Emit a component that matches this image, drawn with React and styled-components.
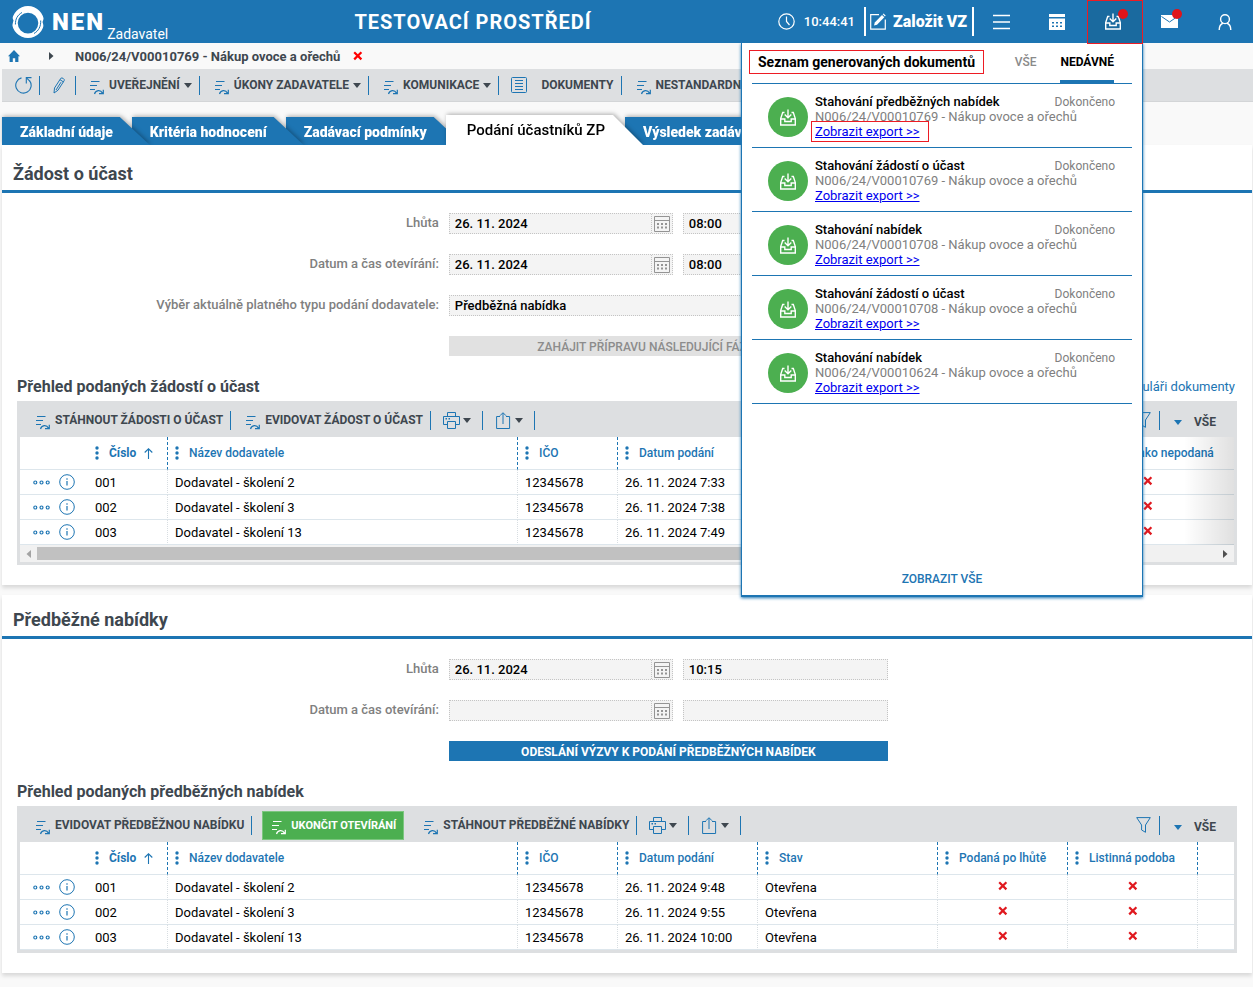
import styled, { createGlobalStyle } from "styled-components";

const BLUE = "#1d75b3";
const GREY = "#dddfe1";
const DARK = "#3e474f";

const GlobalStyle = createGlobalStyle`
  * {
    box-sizing: border-box;
  }
  body {
    margin: 0;
    background: #f9f9f9;
    font-family: Roboto, "Liberation Sans", sans-serif;
    font-size: 13px;
    color: #000;
  }
  button, input {
    font-family: inherit;
  }
  button {
    cursor: pointer;
  }
  svg {
    display: block;
    flex-shrink: 0;
  }
`;

const SHeader = styled.header`
  position: relative;
  z-index: 20;
  display: flex;
  align-items: center;
  height: 43px;
  background: ${BLUE};
  color: #fff;
`;

const Logo = styled.a`
  display: flex;
  align-items: center;
  padding-left: 12px;
  color: #fff;
  text-decoration: none;
  .name {
    margin: 0 2px 0 8px;
    font-size: 24px;
    font-weight: 900;
    letter-spacing: 2px;
  }
  .role {
    align-self: flex-end;
    font-size: 14px;
    line-height: 16px;
    padding-top: 24px;
  }
`;

const EnvTitle = styled.h1`
  flex: 1;
  margin: 0;
  text-align: center;
  font-size: 20px;
  font-weight: 700;
  letter-spacing: 1px;
`;

const Clock = styled.div`
  display: flex;
  align-items: center;
  gap: 9px;
  padding-right: 9px;
  font-weight: 500;
`;

const NewOrder = styled.button`
  display: flex;
  align-items: center;
  gap: 7px;
  height: 29px;
  margin-right: -1px;
  padding: 0 5px 0 4px;
  border: 0;
  border-left: 2px solid #fff;
  border-right: 2px solid #fff;
  background: none;
  color: #fff;
  font-size: 16px;
  font-weight: 900;
`;

const HeaderButton = styled.button`
  position: relative;
  display: flex;
  align-items: center;
  justify-content: center;
  width: 56px;
  height: ${(p) => (p.$active ? 44 : 43)}px;
  margin: ${(p) => (p.$active ? "0 -2px 0 2px" : "0")};
  padding: ${(p) => (p.$active ? "0 4px 0 0" : "0")};
  border: 1px solid ${(p) => (p.$active ? "#ed1c24" : "transparent")};
  background: ${(p) => (p.$active ? "#1a6a9f" : "none")};
  color: #fff;
`;

const Dot = styled.span`
  position: absolute;
  top: 8px;
  right: 14px;
  width: 10px;
  height: 10px;
  border-radius: 50%;
  background: #e01419;
`;

const Popup = styled.aside`
  position: absolute;
  top: 43px;
  right: 110px;
  z-index: -1;
  display: flex;
  flex-direction: column;
  width: 402px;
  height: 554px;
  padding: 0 10px;
  border: solid ${BLUE};
  border-width: 0 1px 2px;
  box-shadow: 0 1px 3px ${BLUE};
  background: #fff;
  color: #000;
`;

const PopupHead = styled.div`
  display: flex;
  align-items: stretch;
  height: 41px;
  padding-right: 18px;
  border-bottom: 1px solid ${BLUE};
  h2 {
    align-self: flex-start;
    margin: 7px auto 0 -3px;
    padding: 0 8px;
    border: 1px solid #ed1c24;
    font-size: 14px;
    line-height: 22px;
    font-weight: 700;
  }
`;

const PopupTab = styled.button`
  margin-left: 24px;
  padding: 0;
  border: 0;
  border-bottom: 3px solid ${(p) => (p.$active ? BLUE : "transparent")};
  background: none;
  color: ${(p) => (p.$active ? "#000" : "#8a8a8a")};
  font-size: 12px;
  font-weight: ${(p) => (p.$active ? 700 : 500)};
`;

const ExportList = styled.ul`
  flex: 1;
  margin: 0;
  padding: 0;
  list-style: none;
`;

const ExportRow = styled.li`
  display: grid;
  grid-template-columns: 40px minmax(0, 1fr) auto;
  column-gap: 7px;
  height: 64px;
  padding: 10px 17px 0 16px;
  border-bottom: 1px solid ${BLUE};
  line-height: 15px;
  .icon {
    display: flex;
    align-items: center;
    justify-content: center;
    width: 40px;
    height: 40px;
    margin-top: 3px;
    border-radius: 50%;
    background: #4caf50;
    color: #fff;
  }
  .name {
    font-weight: 500;
  }
  .order {
    color: #808080;
    white-space: nowrap;
  }
  .status {
    color: #808080;
    font-size: 12px;
    line-height: 17px;
  }
`;

const ExportLink = styled.a`
  display: inline-block;
  margin-left: -1px;
  padding: 0 6px 0 1px;
  outline: ${(p) => (p.$marked ? "1px solid #ed1c24" : "none")};
  outline-offset: 2px;
  color: #0000ee;
`;

const ShowAll = styled.button`
  align-self: center;
  padding: 0;
  margin-bottom: 8px;
  border: 0;
  background: none;
  color: ${BLUE};
  font-size: 12px;
  line-height: 16px;
  font-weight: 500;
`;

const Breadcrumb = styled.nav`
  display: flex;
  align-items: center;
  height: 26px;
  padding-left: 8px;
  color: ${DARK};
  font-weight: 700;
  .arrow {
    margin: 0 21px 0 29px;
  }
  .current {
    margin-right: 13px;
  }
  button {
    padding: 0;
    border: 0;
    background: none;
  }
`;

const Toolbar = styled.div`
  display: flex;
  align-items: center;
  height: 33px;
  margin-left: 2px;
  background: ${GREY};
  border-bottom: 1px solid #d3d5d7;
  overflow: hidden;
`;

const TableToolbar = styled.div`
  display: flex;
  align-items: center;
  height: 36px;
  padding: 2px 0 0 1px;
`;

const Tool = styled.button`
  display: flex;
  align-items: center;
  height: 19px;
  gap: ${(p) => p.$gap || 5}px;
  padding: 0 ${(p) => p.$right || 7}px 0 ${(p) => p.$left || 15}px;
  border: 0;
  border-right: 1px solid ${(p) => (p.$last ? "transparent" : BLUE)};
  background: none;
  color: ${DARK};
  font-size: 12px;
  font-weight: 700;
  white-space: nowrap;
  .action {
    margin-top: 4px;
  }
  .caret:last-child {
    margin-left: -1px;
  }
`;

const GreenTool = styled(Tool)`
  height: 29px;
  margin: 0 5px 0 10px;
  padding: 0 7px 0 9px;
  border: 1px solid #7cc67f;
  background: #4caf50;
  color: #fff;
  font-size: 11px;
`;

const ViewTool = styled(Tool)`
  gap: 12px;
  padding: 4px 17px 0 15px;
`;

const ToolSpace = styled.div`
  flex: 1;
`;

const Tabs = styled.ul`
  display: flex;
  align-items: flex-end;
  height: 43px;
  margin: 0;
  padding: 0 0 0 2px;
  list-style: none;
  overflow: hidden;
`;

const TabItem = styled.li`
  z-index: ${(p) => p.$order};
  margin-right: -18px;
  filter: drop-shadow(1px -1px 2px rgba(0, 0, 0, 0.3));
`;

const Tab = styled.a`
  display: block;
  height: ${(p) => (p.$active ? 30 : 28)}px;
  padding: ${(p) => (p.$active ? "0 38px 0 21px" : "0 37px 0 18px")};
  clip-path: polygon(0 0, calc(100% - 30px) 0, 100% 100%, 0 100%);
  background: ${(p) => (p.$active ? "#fff" : BLUE)};
  color: ${(p) => (p.$active ? "#000" : "#fff")};
  font-size: ${(p) => (p.$active ? 15 : 14)}px;
  line-height: 30px;
  font-weight: ${(p) => (p.$active ? 500 : 900)};
  text-decoration: none;
  white-space: nowrap;
`;

const Panel = styled.main`
  padding-bottom: 14px;
`;

const Card = styled.section`
  margin: 0 1px 10px 2px;
  padding: 0 15px 20px;
  background: #fff;
  box-shadow: 0 3px 4px rgba(0, 0, 0, 0.13);
  &:first-child {
    border-top: 4px solid #fff;
  }
`;

const CardTitle = styled.h2`
  margin: 0 -15px;
  padding: 15px 11px 6px;
  border-bottom: 3px solid ${BLUE};
  color: ${DARK};
  font-size: 18px;
  line-height: 20px;
  font-weight: 700;
`;

const Form = styled.form`
  display: grid;
  gap: 20px;
  margin: 0 -15px;
  padding: 20px 0;
`;

const FormRow = styled.div`
  display: grid;
  grid-template-columns: 35% 224px 205px;
  column-gap: 10px;
  height: ${(p) => (p.$short ? 20 : 21)}px;
  margin-left: -1px;
  label {
    text-align: right;
    line-height: 19px;
    font-weight: 500;
    color: #808080;
    white-space: nowrap;
  }
`;

const FieldBox = styled.div`
  display: flex;
  border: 1px dotted #c4c4c4;
  background: #f4f4f4;
  grid-column: ${(p) => (p.$wide ? "2 / 4" : "auto")};
  input {
    flex: 1;
    min-width: 0;
    padding: 0 5px;
    border: 0;
    background: none;
    color: #000;
    font-size: 13px;
    font-weight: 500;
  }
  button {
    display: flex;
    align-items: center;
    padding: 0 2px;
    border: 0;
    border-left: 1px dotted #c4c4c4;
    background: none;
  }
`;

const WideButton = styled.button`
  grid-column: 2 / 4;
  padding: 2px 0 0;
  border: 0;
  background: ${(p) => (p.disabled ? "#e1e1e1" : BLUE)};
  color: ${(p) => (p.disabled ? "#8c8c8c" : "#fff")};
  font-size: 12px;
  font-weight: ${(p) => (p.disabled ? 500 : 700)};
  white-space: nowrap;
`;

const ListHead = styled.div`
  display: flex;
  justify-content: space-between;
  padding: 1px 2px 4px 0;
  line-height: 20px;
  h3 {
    margin: 0;
    color: ${DARK};
    font-size: 16px;
    font-weight: 700;
  }
  a {
    color: ${BLUE};
    text-decoration: none;
  }
`;

const TableFrame = styled.div`
  background: ${GREY};
  padding: 0 3px 3px;
`;

const TableScroll = styled.div`
  position: relative;
  overflow: hidden;
  background: #fff;
`;

const EdgeShade = styled.span`
  position: absolute;
  top: 0;
  right: 0;
  bottom: 0;
  width: 50px;
  background: linear-gradient(to right, rgba(0, 0, 0, 0), rgba(0, 0, 0, 0.12));
`;

const Table = styled.table`
  width: 100%;
  border-spacing: 0;
  table-layout: fixed;
  th,
  td {
    padding: 0;
    border-bottom: 1px solid #dde6ec;
    text-align: left;
    white-space: nowrap;
  }
  th {
    height: 33px;
    border-right: 1px dashed ${BLUE};
    color: ${BLUE};
    font-size: 12px;
    font-weight: 500;
  }
  td {
    height: 25px;
    padding-left: 7px;
    border-right: 1px dotted #d8dee2;
  }
  th:first-child,
  td:first-child,
  th:last-child,
  td:last-child {
    border-right: 0;
  }
  td:has(.cross) {
    padding: 0 0 2px;
  }
  .cross {
    margin: 0 auto;
  }
`;

const HeadCell = styled.div`
  display: flex;
  align-items: center;
  gap: 10px;
  padding-left: 7px;
  font-weight: ${(p) => (p.$sorted ? 700 : 500)};
  .sort {
    margin-left: -2px;
  }
`;

const RowActions = styled.div`
  display: flex;
  align-items: center;
  gap: 9px;
  padding-left: 6px;
  button {
    padding: 0;
    border: 0;
    background: none;
  }
`;

const ScrollTrack = styled.div`
  display: flex;
  align-items: center;
  height: 17px;
  background: #f1f1f1;
  .thumb {
    width: 84%;
    height: 13px;
    background: #c1c1c1;
  }
  .arrow {
    display: flex;
    justify-content: center;
    width: 17px;
  }
  .arrow:last-child {
    margin-left: auto;
  }
`;

const LogoIcon = () => (
  <svg width="32" height="32" viewBox="0 0 32 32">
    <path
      d="M16 0a16 16 0 1 1 0 32 16 16 0 0 1 0-32zm0 6.800a10.300 10.300 0 1 0 0 20.600 10.300 10.300 0 0 0 0-20.600z"
      fill="#fff"
      fillRule="evenodd"
    />
    <path d="M10 6.500C5.500 9 3.300 13 3.400 18.500" fill="none" stroke={BLUE} />
    <path d="M22 27.500c4.500-2.500 7-7 6.700-13" fill="none" stroke={BLUE} />
    <path d="M0 11l1.500 3.500L0 20zM32 12l-1.500 4 1.500 5z" fill={BLUE} />
  </svg>
);

const ClockIcon = () => (
  <svg width="17" height="17" viewBox="0 0 17 17" fill="none" stroke="#fff" strokeWidth="1.2">
    <circle cx="8.500" cy="8.500" r="7.700" />
    <path d="M8.500 3.500v5l3 3.500" />
  </svg>
);

const EditIcon = () => (
  <svg width="16" height="17" viewBox="0 0 16 17" fill="none" stroke="#fff" strokeWidth="1.200">
    <path d="M9 1.600H.7v14.600h14.600V6.500" />
    <path d="M4 12.500l.8-3L12 2l2.300 2.200-7.300 7.500z" fill="#fff" stroke="none" />
    <path d="M12.700 1.300l2.200 2.100.8-.9L13.500.4z" fill="#fff" stroke="none" />
  </svg>
);

const MenuIcon = () => (
  <svg width="17" height="16" viewBox="0 0 17 16" stroke="#fff" strokeWidth="1.300">
    <path d="M0 1.500h17M0 8h17M0 14.500h17" />
  </svg>
);

const HeaderCalendarIcon = () => (
  <svg width="16" height="16" viewBox="0 0 16 16">
    <path d="M0 0h16v3H0z M0 4.500h16V16H0z" fill="#fff" />
    <path
      d="M3 8h2v1.500H3zM7 8h2v1.500H7zM11 8h2v1.500h-2zM3 11.500h2V13H3zM7 11.500h2V13H7zM11 11.500h2V13h-2z"
      fill={BLUE}
    />
  </svg>
);

const InboxIcon = () => (
  <svg width="16" height="17" viewBox="0 0 16 17" fill="none" stroke="currentColor" strokeWidth="1.400">
    <path d="M4.500 3.500H2.700L.7 9.500v6.500h14.600V9.500l-2-6h-1.800" />
    <path d="M.7 10h4.100v2.500h6.400V10h4.100" />
    <path d="M8 .500v8M4.700 5.500L8 8.700l3.300-3.200" />
  </svg>
);

const MailIcon = () => (
  <svg width="17" height="13" viewBox="0 0 17 13">
    <path d="M0 0h17v13H0z" fill="#fff" />
    <path d="M.5 1.500l8 5.500 8-5.500" fill="none" stroke={BLUE} />
  </svg>
);

const UserIcon = () => (
  <svg width="14" height="16" viewBox="0 0 14 16" fill="none" stroke="#fff" strokeWidth="1.400">
    <circle cx="7" cy="5.200" r="4.400" />
    <path d="M1.200 16c0-4 1.500-6 4-7M12.800 16c0-4-1.500-6-4-7" />
  </svg>
);

const HomeIcon = () => (
  <svg width="12" height="12" viewBox="0 0 12 12">
    <path d="M6 0l6 6.200h-1.600V12H7.200V8.200H4.800V12H1.600V6.200H0z" fill={BLUE} />
  </svg>
);

const Cross = ({ color = "#e0191f" }) => (
  <svg className="cross" width="10" height="10" viewBox="0 0 10 10" stroke={color} strokeWidth="2.200">
    <path d="M1.200 1.200l7.200 7.200M8.400 1.200L1.200 8.400" />
  </svg>
);

const Caret = ({ color = DARK }) => (
  <svg className="caret" width="8" height="5" viewBox="0 0 8 5">
    <path d="M0 0h8L4 5z" fill={color} />
  </svg>
);

const SideArrow = ({ left, color }) => (
  <svg width="5" height="8" viewBox="0 0 5 8">
    <path d={left ? "M5 0v8L.500 4z" : "M0 0v8l4.500-4z"} fill={color} />
  </svg>
);

const ActionIcon = ({ color = BLUE }) => (
  <svg className="action" width="14" height="15" viewBox="0 0 14 15" fill="none" stroke={color} strokeWidth="1.200">
    <path d="M1 1.500h8.500M0 5.500h7M0 9.500h5" />
    <path d="M4.500 14c1-4 6-4.800 8-.8M13.300 9.800v3.800H9" />
  </svg>
);

const RefreshIcon = () => (
  <svg width="17" height="17" viewBox="0 0 17 17" fill="none" stroke={BLUE} strokeWidth="1.100">
    <path d="M6.500.9A7.700 7.700 0 1 0 14.500 3.600" />
    <path d="M16.500.6h-5.200v6" />
    <path d="M11.500.8l3.500 3.600" />
  </svg>
);

const PencilIcon = () => (
  <svg width="12" height="17" viewBox="0 0 12 17" fill="none" stroke={BLUE}>
    <path d="M1 16l.5-5L7.800 1.300c1-1.200 4.200.7 3.400 2.300L5 13.200z" />
    <path d="M7 2.700l3.400 2.200M8 5.200L3 13" />
  </svg>
);

const DocIcon = () => (
  <svg width="16" height="16" viewBox="0 0 16 16" fill="none" stroke={BLUE}>
    <rect x=".5" y=".5" width="15" height="15" rx="1" />
    <path d="M4 3.500h8M4 6.500h8M4 9.500h8M4 12.500h8" />
  </svg>
);

const PrintIcon = () => (
  <svg width="17" height="17" viewBox="0 0 17 17" fill="none" stroke={BLUE}>
    <path d="M4.500 4.500v-4h8v4M4.500 12.500h-4v-8h16v8h-4" />
    <path d="M4.500 9.500h8v7h-8z" />
    <path d="M2.500 6.800h1.500M5.500 6.800H7" strokeWidth="1.500" />
  </svg>
);

const ShareIcon = () => (
  <svg width="15" height="17" viewBox="0 0 15 17" fill="none" stroke={BLUE}>
    <path d="M4 4.500H.6v12h13v-12H10M7 12V1M4 3.700L7 .700l3 3" />
  </svg>
);

const FilterIcon = () => (
  <svg width="15" height="16" viewBox="0 0 15 16" fill="none" stroke={BLUE}>
    <path d="M.7.600h13.600L9.500 8v7.300L5.600 13V8z" />
  </svg>
);

const CalendarIcon = () => (
  <svg width="16" height="16" viewBox="0 0 16 16" fill="none" stroke="#949494">
    <path d="M.5.5h15v15H.5zM.5 4.500h15" />
    <path d="M3 8h10M3 11.500h10" strokeWidth="2" strokeDasharray="2 2" />
  </svg>
);

const DotsIcon = () => (
  <svg width="4" height="14" viewBox="0 0 4 14" fill={BLUE}>
    <circle cx="2" cy="2" r="1.700" />
    <circle cx="2" cy="7" r="1.700" />
    <circle cx="2" cy="12" r="1.700" />
  </svg>
);

const SortIcon = () => (
  <svg className="sort" width="9" height="11" viewBox="0 0 9 11" fill="none" stroke={BLUE} strokeWidth="1.100">
    <path d="M4.500 11V1M.7 4.500L4.500.800l3.800 3.700" />
  </svg>
);

const MoreIcon = () => (
  <svg width="17" height="5" viewBox="0 0 17 5" fill="none" stroke={BLUE} strokeWidth="1.200">
    <circle cx="2.300" cy="2.500" r="1.500" />
    <circle cx="8.500" cy="2.500" r="1.500" />
    <circle cx="14.700" cy="2.500" r="1.500" />
  </svg>
);

const InfoIcon = () => (
  <svg width="16" height="16" viewBox="0 0 16 16" fill="none" stroke={BLUE}>
    <circle cx="8" cy="8" r="7.300" />
    <path d="M8 7v4.500M8 4.300v1.400" strokeWidth="1.200" />
  </svg>
);

const exportsList = [
  { name: "Stahování předběžných nabídek", order: "N006/24/V00010769" },
  { name: "Stahování žádostí o účast", order: "N006/24/V00010769" },
  { name: "Stahování nabídek", order: "N006/24/V00010708" },
  { name: "Stahování žádostí o účast", order: "N006/24/V00010708" },
  { name: "Stahování nabídek", order: "N006/24/V00010624" },
];

const tabs = [
  "Základní údaje",
  "Kritéria hodnocení",
  "Zadávací podmínky",
  "Podání účastníků ZP",
  "Výsledek zadávacího postupu",
];
const activeTab = 3;

const requestColumns = [
  { title: "Číslo", width: 80, sorted: true },
  { title: "Název dodavatele", width: 350 },
  { title: "IČO", width: 100 },
  { title: "Datum podání", width: 140 },
  { title: "Stav", width: 170 },
  { title: "Podaná po lhůtě", width: 130 },
  { title: "Označena jako nepodaná", width: 180 },
];

const requests = [
  ["001", "Dodavatel - školení 2", "12345678", "26. 11. 2024 7:33", "Otevřena", false, false],
  ["002", "Dodavatel - školení 3", "12345678", "26. 11. 2024 7:38", "Otevřena", false, false],
  ["003", "Dodavatel - školení 13", "12345678", "26. 11. 2024 7:49", "Otevřena", false, false],
];

const offerColumns = [
  { title: "Číslo", width: 80, sorted: true },
  { title: "Název dodavatele", width: 350 },
  { title: "IČO", width: 100 },
  { title: "Datum podání", width: 140 },
  { title: "Stav", width: 180 },
  { title: "Podaná po lhůtě", width: 130 },
  { title: "Listinná podoba", width: 130 },
];

const offers = [
  ["001", "Dodavatel - školení 2", "12345678", "26. 11. 2024 9:48", "Otevřena", false, false],
  ["002", "Dodavatel - školení 3", "12345678", "26. 11. 2024 9:55", "Otevřena", false, false],
  ["003", "Dodavatel - školení 13", "12345678", "26. 11. 2024 10:00", "Otevřena", false, false],
];

const ExportsPopup = () => (
  <Popup>
    <PopupHead>
      <h2>Seznam generovaných dokumentů</h2>
      <PopupTab>VŠE</PopupTab>
      <PopupTab $active>NEDÁVNÉ</PopupTab>
    </PopupHead>
    <ExportList>
      {exportsList.map((item, i) => (
        <ExportRow key={i}>
          <span className="icon">
            <InboxIcon />
          </span>
          <div>
            <div className="name">{item.name}</div>
            <div className="order">{item.order} - Nákup ovoce a ořechů</div>
            <ExportLink href="#export" $marked={i === 0}>
              Zobrazit export &gt;&gt;
            </ExportLink>
          </div>
          <span className="status">Dokončeno</span>
        </ExportRow>
      ))}
    </ExportList>
    <ShowAll>ZOBRAZIT VŠE</ShowAll>
  </Popup>
);

const Header = () => (
  <SHeader>
    <Logo href="#home">
      <LogoIcon />
      <span className="name">NEN</span>
      <span className="role">Zadavatel</span>
    </Logo>
    <EnvTitle>TESTOVACÍ PROSTŘEDÍ</EnvTitle>
    <Clock>
      <ClockIcon />
      10:44:41
    </Clock>
    <NewOrder>
      <EditIcon />
      Založit VZ
    </NewOrder>
    <HeaderButton aria-label="Menu">
      <MenuIcon />
    </HeaderButton>
    <HeaderButton aria-label="Kalendář">
      <HeaderCalendarIcon />
    </HeaderButton>
    <HeaderButton aria-label="Generované dokumenty" $active>
      <InboxIcon />
      <Dot />
    </HeaderButton>
    <HeaderButton aria-label="Zprávy">
      <MailIcon />
      <Dot />
    </HeaderButton>
    <HeaderButton aria-label="Uživatel">
      <UserIcon />
    </HeaderButton>
    <ExportsPopup />
  </SHeader>
);

const Field = ({ id, value, wide, calendar, label }) => (
  <FieldBox $wide={wide}>
    <input id={id} defaultValue={value} aria-label={label} readOnly />
    {calendar && (
      <button type="button" aria-label="Vybrat datum">
        <CalendarIcon />
      </button>
    )}
  </FieldBox>
);

const DateRow = ({ id, label, date, time }) => (
  <FormRow>
    <label htmlFor={id}>{label}</label>
    <Field id={id} value={date} calendar />
    <Field value={time} label={`${label} čas`} />
  </FormRow>
);

const PrintTools = () => (
  <>
    <Tool $left={12} $right={11} $gap={4} aria-label="Tisk">
      <PrintIcon />
      <Caret />
    </Tool>
    <Tool $left={13} $right={11} $gap={5} aria-label="Export">
      <ShareIcon />
      <Caret />
    </Tool>
    <ToolSpace />
    <Tool $left={12} $right={8} aria-label="Filtr">
      <FilterIcon />
    </Tool>
    <ViewTool $last>
      <Caret color={BLUE} />
      VŠE
    </ViewTool>
  </>
);

const DataTable = ({ columns, rows }) => (
  <Table>
    <colgroup>
      <col style={{ width: 68 }} />
      {columns.map((c) => (
        <col key={c.title} style={{ width: c.width }} />
      ))}
      <col />
    </colgroup>
    <thead>
      <tr>
        <th aria-label="Akce" />
        {columns.map((c) => (
          <th key={c.title}>
            <HeadCell $sorted={c.sorted}>
              <DotsIcon />
              {c.title}
              {c.sorted && <SortIcon />}
            </HeadCell>
          </th>
        ))}
        <th aria-label="Konec" />
      </tr>
    </thead>
    <tbody>
      {rows.map((row) => (
        <tr key={row[0]}>
          <td>
            <RowActions>
              <button aria-label="Další">
                <MoreIcon />
              </button>
              <button aria-label="Detail">
                <InfoIcon />
              </button>
            </RowActions>
          </td>
          {row.map((cell, i) => (
            <td key={i}>{cell === false ? <Cross /> : cell}</td>
          ))}
          <td />
        </tr>
      ))}
    </tbody>
  </Table>
);

export default function App() {
  return (
    <>
      <GlobalStyle />
      <Header />
      <Breadcrumb>
        <a href="#home" aria-label="Domů">
          <HomeIcon />
        </a>
        <span className="arrow">
          <SideArrow color={DARK} />
        </span>
        <span className="current">N006/24/V00010769 - Nákup ovoce a ořechů</span>
        <button aria-label="Zavřít">
          <Cross color="#f00" />
        </button>
      </Breadcrumb>
      <Toolbar>
        <Tool $left={13} aria-label="Obnovit">
          <RefreshIcon />
        </Tool>
        <Tool $left={13} $right={10} aria-label="Upravit">
          <PencilIcon />
        </Tool>
        <Tool $left={14}>
          <ActionIcon />
          UVEŘEJNĚNÍ
          <Caret />
        </Tool>
        <Tool>
          <ActionIcon />
          ÚKONY ZADAVATELE
          <Caret />
        </Tool>
        <Tool>
          <ActionIcon />
          KOMUNIKACE
          <Caret />
        </Tool>
        <Tool $left={12} $gap={14}>
          <DocIcon />
          DOKUMENTY
        </Tool>
        <Tool>
          <ActionIcon />
          NESTANDARDNÍ STAVY
          <Caret />
        </Tool>
      </Toolbar>
      <Tabs>
        {tabs.map((tab, i) => (
          <TabItem key={tab} $order={i === activeTab ? 10 : 9 - i}>
            <Tab href="#tab" $active={i === activeTab}>
              {tab}
            </Tab>
          </TabItem>
        ))}
      </Tabs>
      <Panel>
        <Card>
          <CardTitle>Žádost o účast</CardTitle>
          <Form>
            <DateRow id="request-due" label="Lhůta" date="26. 11. 2024" time="08:00" />
            <DateRow id="request-open" label="Datum a čas otevírání:" date="26. 11. 2024" time="08:00" />
            <FormRow>
              <label htmlFor="request-type">Výběr aktuálně platného typu podání dodavatele:</label>
              <Field id="request-type" value="Předběžná nabídka" wide />
            </FormRow>
            <FormRow $short>
              <WideButton type="button" disabled>
                ZAHÁJIT PŘÍPRAVU NÁSLEDUJÍCÍ FÁZE ZADÁNÍ
              </WideButton>
            </FormRow>
          </Form>
          <ListHead>
            <h3>Přehled podaných žádostí o účast</h3>
            <a href="#documents">Přiřadit k formuláři dokumenty</a>
          </ListHead>
          <TableFrame>
            <TableToolbar>
              <Tool>
                <ActionIcon />
                STÁHNOUT ŽÁDOSTI O ÚČAST
              </Tool>
              <Tool>
                <ActionIcon />
                EVIDOVAT ŽÁDOST O ÚČAST
              </Tool>
              <PrintTools />
            </TableToolbar>
            <TableScroll>
              <DataTable columns={requestColumns} rows={requests} />
              <EdgeShade />
            </TableScroll>
            <ScrollTrack>
              <span className="arrow">
                <SideArrow left color="#a3a3a3" />
              </span>
              <span className="thumb" />
              <span className="arrow">
                <SideArrow color="#505050" />
              </span>
            </ScrollTrack>
          </TableFrame>
        </Card>
        <Card>
          <CardTitle>Předběžné nabídky</CardTitle>
          <Form>
            <DateRow id="offer-due" label="Lhůta" date="26. 11. 2024" time="10:15" />
            <DateRow id="offer-open" label="Datum a čas otevírání:" date="" time="" />
            <FormRow $short>
              <WideButton type="button">ODESLÁNÍ VÝZVY K PODÁNÍ PŘEDBĚŽNÝCH NABÍDEK</WideButton>
            </FormRow>
          </Form>
          <ListHead>
            <h3>Přehled podaných předběžných nabídek</h3>
          </ListHead>
          <TableFrame>
            <TableToolbar>
              <Tool>
                <ActionIcon />
                EVIDOVAT PŘEDBĚŽNOU NABÍDKU
              </Tool>
              <GreenTool>
                <ActionIcon color="#fff" />
                UKONČIT OTEVÍRÁNÍ
              </GreenTool>
              <Tool>
                <ActionIcon />
                STÁHNOUT PŘEDBĚŽNÉ NABÍDKY
              </Tool>
              <PrintTools />
            </TableToolbar>
            <TableScroll>
              <DataTable columns={offerColumns} rows={offers} />
            </TableScroll>
          </TableFrame>
        </Card>
      </Panel>
    </>
  );
}
